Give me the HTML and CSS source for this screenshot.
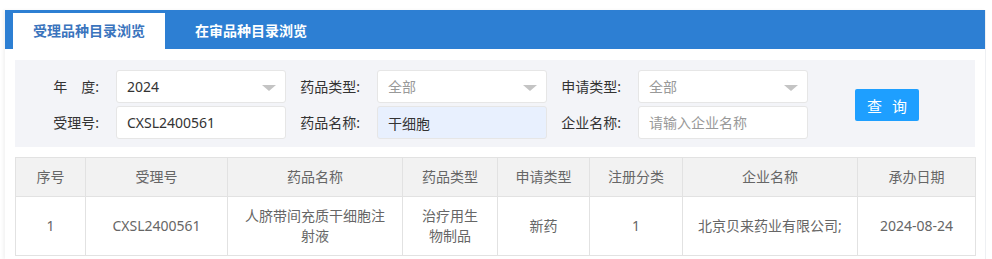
FILE: index.html
```html
<!DOCTYPE html>
<html lang="zh-CN">
<head>
    <meta charset="UTF-8">
    <meta name="viewport" content="width=device-width, initial-scale=1.0">
    <title>品种目录浏览</title>
    <link rel="stylesheet" href="styles.css">
</head>
<body>

    <div class="panel">
        <div class="tabs">
            <div class="tab active">受理品种目录浏览</div>
            <div class="tab">在审品种目录浏览</div>
        </div>

        <div class="panel-body">
            <div class="filter">
                <div class="fields">
                    <label class="lbl">年　度:</label>
                    <div class="box select"><span>2024</span></div>
                    <label class="lbl">药品类型:</label>
                    <div class="box select"><span class="muted">全部</span></div>
                    <label class="lbl">申请类型:</label>
                    <div class="box select"><span class="muted">全部</span></div>

                    <label class="lbl">受理号:</label>
                    <input class="box" type="text" value="CXSL2400561">
                    <label class="lbl">药品名称:</label>
                    <input class="box filled" type="text" value="干细胞">
                    <label class="lbl">企业名称:</label>
                    <input class="box" type="text" placeholder="请输入企业名称">
                </div>
                <button class="btn-search">查 询</button>
            </div>

            <table class="result">
                <colgroup>
                    <col style="width:70px">
                    <col style="width:142px">
                    <col style="width:175px">
                    <col style="width:95px">
                    <col style="width:92px">
                    <col style="width:93px">
                    <col style="width:175px">
                    <col style="width:118px">
                </colgroup>
                <thead>
                    <tr>
                        <th>序号</th>
                        <th>受理号</th>
                        <th>药品名称</th>
                        <th>药品类型</th>
                        <th>申请类型</th>
                        <th>注册分类</th>
                        <th>企业名称</th>
                        <th>承办日期</th>
                    </tr>
                </thead>
                <tbody>
                    <tr>
                        <td>1</td>
                        <td>CXSL2400561</td>
                        <td>人脐带间充质干细胞注射液</td>
                        <td>治疗用生物制品</td>
                        <td>新药</td>
                        <td>1</td>
                        <td>北京贝来药业有限公司;</td>
                        <td>2024-08-24</td>
                    </tr>
                </tbody>
            </table>
        </div>
    </div>

</body>
</html>
```

FILE: styles.css
```css
* {
    margin: 0;
    padding: 0;
    box-sizing: border-box;
}

body {
    background: #ffffff;
    font-family: "Noto Sans", "Noto Sans CJK SC", sans-serif;
    font-size: 14px;
    color: #333;
    padding-top: 10px;
}

.panel {
    width: 981px;
    margin-left: 5px;
    height: 249px;
    background: #fff;
    box-shadow: -2px 0 3px rgba(0, 0, 0, 0.05);
    border-right: 1px solid #eef0f3;
}

.tabs {
    display: flex;
    align-items: flex-end;
    height: 39px;
    padding-left: 8px;
    background: #2d7fd3;
}

.tab {
    height: 36px;
    line-height: 36px;
    padding: 0 20px;
    color: #fff;
    font-weight: bold;
    font-size: 14px;
}

.tab.active {
    background: #fff;
    color: #3a74bd;
    margin-right: 10px;
}

.panel-body {
    padding: 11px 10px 0;
}

.filter {
    display: flex;
    align-items: center;
    width: 960px;
    padding: 10px 0 8px 10px;
    background: #f3f4f8;
}

.fields {
    display: grid;
    grid-template-columns: 91px 170px 91px 170px 91px 170px;
    row-gap: 3px;
}

.lbl {
    height: 33px;
    line-height: 33px;
    text-align: right;
    padding-right: 17px;
    color: #333;
}

.box {
    height: 33px;
    width: 170px;
    border: 1px solid #e6e6e6;
    border-radius: 3px;
    background: #fff;
    padding: 0 10px;
    font-family: inherit;
    font-size: 14px;
    color: #333;
    outline: none;
}

.box::placeholder {
    color: #999;
}

.box.filled {
    background: #e8f0fe;
}

.select {
    position: relative;
    line-height: 31px;
}

.select::after {
    content: "";
    position: absolute;
    right: 9px;
    top: 14px;
    border-left: 7px solid transparent;
    border-right: 7px solid transparent;
    border-top: 6px solid #c4c4c4;
}

.muted {
    color: #999;
}

.btn-search {
    margin-left: 47px;
    width: 64px;
    height: 32px;
    margin-top: 1px;
    border: none;
    border-radius: 2px;
    background: #1e9fff;
    color: #fff;
    font-family: inherit;
    font-size: 15px;
    letter-spacing: 3px;
    padding-left: 3px;
}

.result {
    margin-top: 10px;
    width: 960px;
    table-layout: fixed;
    border-collapse: collapse;
    color: #666;
}

.result th,
.result td {
    border: 1px solid #e2e2e2;
    text-align: center;
    font-weight: normal;
    padding: 0 14px;
    line-height: 20px;
}

.result th {
    height: 39px;
    background: #f2f2f2;
}

.result td {
    height: 59px;
}
```
